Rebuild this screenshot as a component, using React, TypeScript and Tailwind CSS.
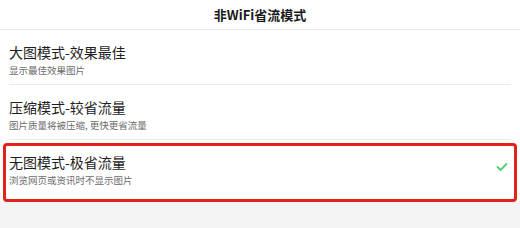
const font = { fontFamily: '"Noto Sans CJK SC", "Noto Sans", sans-serif' };

interface Mode {
  title: string;
  desc: string;
  selected?: boolean;
}

const modes: Mode[] = [
  { title: "大图模式-效果最佳", desc: "显示最佳效果图片" },
  { title: "压缩模式-较省流量", desc: "图片质量将被压缩, 更快更省流量" },
  { title: "无图模式-极省流量", desc: "浏览网页或资讯时不显示图片", selected: true },
];

function ModeRow({ mode, last }: { mode: Mode; last: boolean }) {
  return (
    <div className="relative bg-white px-[9px]">
      <div className={`flex items-start justify-between pt-[12px] ${last ? "h-[61px]" : "h-[55px] border-b border-[#ececec]"}`}>
        <div className="flex flex-col">
          <span className="text-[14px] leading-[20px] text-[#1d1d1d]">{mode.title}</span>
          <span className="mt-[1px] text-[9.5px] leading-[14px] text-[#6b6b6b]">{mode.desc}</span>
        </div>
        {mode.selected && (
          <svg width="12" height="10" viewBox="0 0 12 10" className="mr-[3px] mt-[10px]">
            <polyline points="1.5,5 4.5,8 10.5,2" fill="none" stroke="#4cd26b" strokeWidth="1.8" strokeLinecap="round" strokeLinejoin="round" />
          </svg>
        )}
      </div>
      {mode.selected && (
        <div className="pointer-events-none absolute left-[3px] right-[3px] top-[3px] bottom-[-1px] rounded-[4px] border-[3px] border-[#e3231b]" />
      )}
    </div>
  );
}

export default function App() {
  return (
    <div className="flex h-[228px] w-[520px] flex-col bg-[#f4f4f4]" style={font}>
      <div className="flex h-[30px] items-center justify-center border-b border-[#e6e6e6] bg-white">
        <span className="text-[13px] font-bold text-[#1a1a1a]">非WiFi省流模式</span>
      </div>
      {modes.map((m, i) => (
        <ModeRow key={m.title} mode={m} last={i === modes.length - 1} />
      ))}
    </div>
  );
}
